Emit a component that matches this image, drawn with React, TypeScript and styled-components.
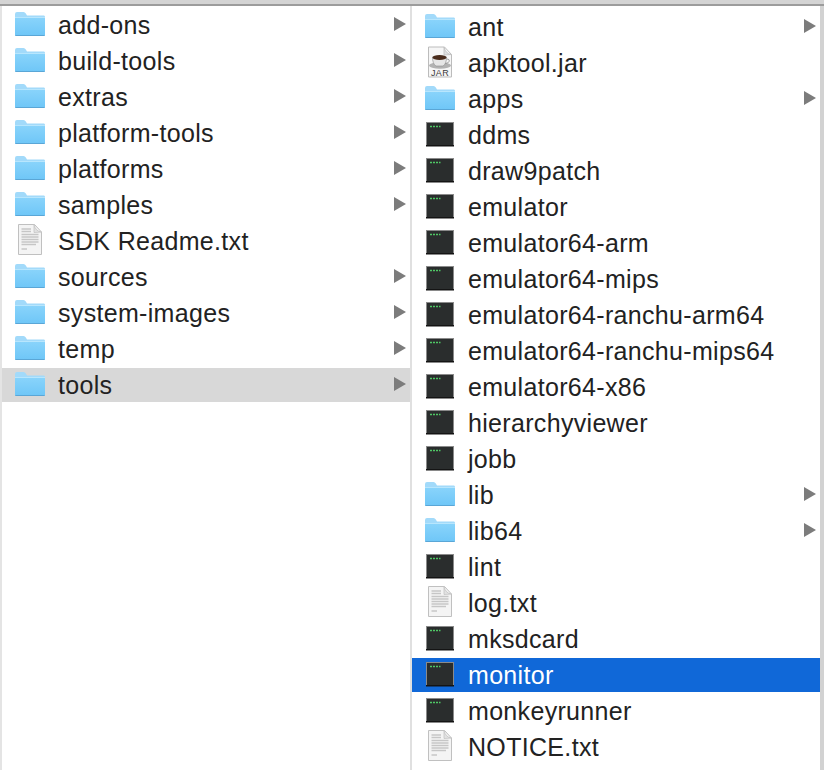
import React from 'react';
import styled, { createGlobalStyle } from 'styled-components';

const GlobalStyle = createGlobalStyle`
  html, body {
    margin: 0;
    padding: 0;
    background: #fff;
  }
  body {
    font-family: "Liberation Sans", Arial, sans-serif;
  }
`;

const Window = styled.div`
  width: 824px;
  height: 770px;
  overflow: hidden;
  display: flex;
  flex-direction: column;
  background: #fff;
`;

const TopBar = styled.div`
  flex: none;
  height: 4px;
  background: #d4d4d4;
  border-bottom: 2px solid #9c9c9c;
`;

const Columns = styled.div`
  flex: 1;
  display: grid;
  grid-template-columns: 408px 410px;
  padding: 0 4px 0 2px;
  background: #fff;
  box-shadow: inset 2px 0 0 #e4e4e4, inset -4px 0 0 #d2d2d2;
`;

const Column = styled.div<{ $top: number }>`
  box-sizing: border-box;
  padding-top: ${(p) => p.$top}px;
  display: flex;
  flex-direction: column;
  gap: 2px;
  min-width: 0;
  & + & {
    border-left: 2px solid #e0e0e0;
  }
`;

const Row = styled.div<{ $state?: 'active' | 'muted' }>`
  flex: none;
  height: 34px;
  display: flex;
  align-items: center;
  gap: 13px;
  padding: 0 4px 0 13px;
  font-size: 25px;
  letter-spacing: 0.32px;
  color: ${(p) => (p.$state === 'active' ? '#fff' : '#222')};
  background: ${(p) =>
    p.$state === 'active' ? '#1068d8' : p.$state === 'muted' ? '#d8d8d8' : 'transparent'};
`;

const Name = styled.span`
  flex: 1;
  white-space: nowrap;
`;

const IconBox = styled.svg`
  flex: none;
  width: 30px;
  height: 34px;
  display: block;
`;

const Arrow = styled.span`
  flex: none;
  position: relative;
  top: -1px;
  width: 0;
  height: 0;
  border-style: solid;
  border-width: 7px 0 7px 12px;
  border-color: transparent transparent transparent #7c7c7c;
`;

const FolderIcon = () => (
  <IconBox viewBox="0 0 30 34">
    <defs>
      <linearGradient id="folderFront" x1="0" y1="0" x2="0" y2="1">
        <stop offset="0" stopColor="#8ad4fb" />
        <stop offset="1" stopColor="#6ec6f7" />
      </linearGradient>
    </defs>
    <path d="M0 6 Q0 4 2 4 L8.5 4 Q10 4 10.8 5.5 L12 7.5 L29 7.5 Q30 7.5 30 9 L30 12 L0 12 Z" fill="#a2dafa" />
    <path d="M0 9 L28.5 9 Q30 9 30 10.5 L30 26.5 Q30 28 28.5 28 L1.5 28 Q0 28 0 26.5 Z" fill="url(#folderFront)" />
    <path d="M0 27 L30 27 Q30 28 28.5 28 L1.5 28 Q0 28 0 27 Z" fill="#5aa6d6" />
    <path d="M0 9.5 L30 9.5" stroke="#b8e6fd" strokeWidth="1" />
  </IconBox>
);

const TextFileIcon = () => (
  <IconBox viewBox="0 0 30 34">
    <path d="M3.5 0.5 L19.5 0.5 L26.5 8 L26.5 30.5 L3.5 30.5 Z" fill="#f4f4f4" stroke="#c0c0c0" strokeWidth="1" />
    <path d="M19 0.5 Q20.5 7.5 26.5 8 L19 8.5 Z" fill="#e2e2e2" stroke="#c4c4c4" strokeWidth="0.8" />
    <path
      d="M6.5 5 H16 M6.5 7.5 H16 M6.5 10.5 H23.5 M6.5 13 H23.5 M6.5 15.5 H23.5 M6.5 18 H23.5 M6.5 20.5 H21 M6.5 25 H12"
      stroke="#c6c6c6"
      strokeWidth="1.3"
    />
  </IconBox>
);

const JarIcon = () => (
  <IconBox viewBox="0 0 30 34">
    <path d="M3.5 1 L19.5 1 L26.5 8.5 L26.5 31 L3.5 31 Z" fill="#f6f6f6" stroke="#bcbcbc" strokeWidth="1" />
    <path d="M19 1 Q20.5 8 26.5 8.5 L19 9 Z" fill="#dedede" stroke="#c0c0c0" strokeWidth="0.8" />
    <ellipse cx="15" cy="19.5" rx="11" ry="3.2" fill="#b2b2b2" />
    <path d="M7.5 11 H21.5 Q21.5 18 18 20 H11 Q7.5 18 7.5 11 Z" fill="#e6e6e6" stroke="#8a8a8a" strokeWidth="0.6" />
    <ellipse cx="14.5" cy="11.5" rx="7" ry="2.4" fill="#4a2c1c" />
    <path d="M21.5 13 Q25 13 24 15.5 Q23 17.5 20 17.5" fill="none" stroke="#9a9a9a" strokeWidth="1" />
    <text x="15" y="30" textAnchor="middle" fontSize="9" fontFamily="Liberation Sans, sans-serif" fill="#3c3c3c">
      JAR
    </text>
  </IconBox>
);

const ExecIcon = () => (
  <IconBox viewBox="0 0 30 34">
    <rect x="1.5" y="4.5" width="27" height="23" fill="#2a2d2d" stroke="#8a8a8a" strokeWidth="1" />
    <rect x="1" y="27" width="28" height="1.5" fill="#141414" />
    <path d="M5 8.5 H7 M8 8.5 H10 M11 8.5 H13 M14 8.5 H15.5" stroke="#4fc765" strokeWidth="1.6" />
  </IconBox>
);

type Kind = 'folder' | 'text' | 'jar' | 'exec';

interface Entry {
  name: string;
  kind: Kind;
}

const ICONS: Record<Kind, React.FC> = {
  folder: FolderIcon,
  text: TextFileIcon,
  jar: JarIcon,
  exec: ExecIcon,
};

const sdkEntries: Entry[] = [
  { name: 'add-ons', kind: 'folder' },
  { name: 'build-tools', kind: 'folder' },
  { name: 'extras', kind: 'folder' },
  { name: 'platform-tools', kind: 'folder' },
  { name: 'platforms', kind: 'folder' },
  { name: 'samples', kind: 'folder' },
  { name: 'SDK Readme.txt', kind: 'text' },
  { name: 'sources', kind: 'folder' },
  { name: 'system-images', kind: 'folder' },
  { name: 'temp', kind: 'folder' },
  { name: 'tools', kind: 'folder' },
];

const toolEntries: Entry[] = [
  { name: 'ant', kind: 'folder' },
  { name: 'apktool.jar', kind: 'jar' },
  { name: 'apps', kind: 'folder' },
  { name: 'ddms', kind: 'exec' },
  { name: 'draw9patch', kind: 'exec' },
  { name: 'emulator', kind: 'exec' },
  { name: 'emulator64-arm', kind: 'exec' },
  { name: 'emulator64-mips', kind: 'exec' },
  { name: 'emulator64-ranchu-arm64', kind: 'exec' },
  { name: 'emulator64-ranchu-mips64', kind: 'exec' },
  { name: 'emulator64-x86', kind: 'exec' },
  { name: 'hierarchyviewer', kind: 'exec' },
  { name: 'jobb', kind: 'exec' },
  { name: 'lib', kind: 'folder' },
  { name: 'lib64', kind: 'folder' },
  { name: 'lint', kind: 'exec' },
  { name: 'log.txt', kind: 'text' },
  { name: 'mksdcard', kind: 'exec' },
  { name: 'monitor', kind: 'exec' },
  { name: 'monkeyrunner', kind: 'exec' },
  { name: 'NOTICE.txt', kind: 'text' },
];

const FileList: React.FC<{ entries: Entry[]; top: number; selected: string; muted?: boolean }> = ({
  entries,
  top,
  selected,
  muted,
}) => (
  <Column $top={top}>
    {entries.map((entry) => {
      const Icon = ICONS[entry.kind];
      const state = entry.name === selected ? (muted ? 'muted' : 'active') : undefined;
      return (
        <Row key={entry.name} $state={state}>
          <Icon />
          <Name>{entry.name}</Name>
          {entry.kind === 'folder' && <Arrow />}
        </Row>
      );
    })}
  </Column>
);

export default function App() {
  return (
    <>
      <GlobalStyle />
      <Window>
        <TopBar />
        <Columns>
          <FileList entries={sdkEntries} top={2} selected="tools" muted />
          <FileList entries={toolEntries} top={4} selected="monitor" />
        </Columns>
      </Window>
    </>
  );
}
